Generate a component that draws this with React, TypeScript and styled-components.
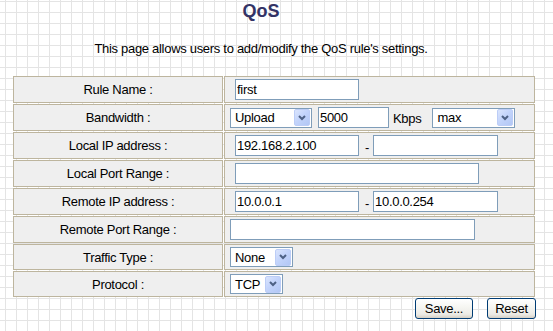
import styled, { createGlobalStyle } from "styled-components";

const GlobalStyle = createGlobalStyle`
  html, body {
    margin: 0;
    padding: 0;
    overflow: hidden;
  }
  body {
    font-family: "Liberation Sans", Arial, sans-serif;
    font-size: 13px;
    letter-spacing: -0.3px;
    color: #000;
    background-color: #fff;
    background-image:
      linear-gradient(to right, #e4e4e4 1px, transparent 1px),
      linear-gradient(to bottom, #e4e4e4 1px, transparent 1px);
    background-size: 11px 11px;
    background-position: 5px 1px;
    min-height: 331px;
  }
`;

const Page = styled.div`
  width: 553px;
`;

const Title = styled.h1`
  width: 522px;
  margin: 1px 0 0;
  text-align: center;
  font-size: 18px;
  line-height: 20px;
  font-weight: bold;
  letter-spacing: 0;
  color: #333366;
`;

const Intro = styled.p`
  width: 522px;
  margin: 20px 0 0;
  text-align: center;
  line-height: 15px;
`;

const RuleTable = styled.table`
  width: 524px;
  margin: 19px 0 0 12px;
  table-layout: fixed;
  border-collapse: separate;
  border-spacing: 1px;
`;

const LabelCell = styled.td`
  width: 198px;
  padding: 2px 5px;
  border: 1px solid #bdb59e;
  background: #efefef;
  text-align: center;
  vertical-align: middle;
  white-space: nowrap;
`;

const ValueCell = styled.td`
  padding: 2px 5px;
  border: 1px solid #bdb59e;
  background: #efefef;
  vertical-align: middle;
  white-space: nowrap;
`;

const FieldRow = styled.div`
  display: flex;
  align-items: center;
`;

const TextField = styled.input<{ $width: number; $indent?: number }>`
  box-sizing: border-box;
  width: ${(p) => p.$width}px;
  height: 21px;
  margin: 0 0 0 ${(p) => p.$indent ?? 0}px;
  padding: 0 1px;
  border: 1px solid #7f9db9;
  border-radius: 0;
  background: #fff;
  font: 13px "Liberation Sans", Arial, sans-serif;
  letter-spacing: -0.3px;
  color: #000;
  outline: none;
`;

const Dash = styled.span`
  padding-top: 4px;
  margin: 0 4px 0 6px;
  line-height: 15px;
`;

const Unit = styled.span`
  margin: 2px 11px 0 4px;
  line-height: 15px;
`;

const SelectBox = styled.div<{ $width: number }>`
  box-sizing: border-box;
  display: flex;
  align-items: center;
  width: ${(p) => p.$width}px;
  height: 20px;
  padding: 0 1px 0 0;
  border: 1px solid #7f9db9;
  background: #fff;
`;

const SelectValue = styled.span`
  flex: 1;
  padding-left: 4px;
  line-height: 15px;
`;

const SelectArrow = styled.span`
  box-sizing: border-box;
  display: flex;
  align-items: center;
  justify-content: center;
  width: 16px;
  height: 17px;
  border: 1px solid #bccdf7;
  border-radius: 2px;
  background: linear-gradient(135deg, #dbe5fd 0%, #c3d4fb 45%, #b2c7f5 100%);
`;

const Actions = styled.div`
  display: flex;
  justify-content: flex-end;
  gap: 14px;
  width: 536px;
`;

const Button = styled.button<{ $width: number }>`
  box-sizing: border-box;
  width: ${(p) => p.$width}px;
  height: 21px;
  padding: 0;
  border: 1px solid #003c74;
  border-radius: 3px;
  background: linear-gradient(to bottom, #ffffff 0%, #f5f5f1 45%, #ecebe6 80%, #d6d0c5 100%);
  font: 13px "Liberation Sans", Arial, sans-serif;
  letter-spacing: -0.3px;
  color: #000;
  line-height: 19px;
`;

function Chevron(): JSX.Element {
  return (
    <svg width="8" height="6" viewBox="0 0 8 6">
      <polyline points="1,1 4,4 7,1" fill="none" stroke="#4d6185" strokeWidth="2" />
    </svg>
  );
}

interface SelectProps {
  value: string;
  width: number;
}

function Select({ value, width }: SelectProps): JSX.Element {
  return (
    <SelectBox $width={width}>
      <SelectValue>{value}</SelectValue>
      <SelectArrow>
        <Chevron />
      </SelectArrow>
    </SelectBox>
  );
}

function ruleRows(): { label: string; content: JSX.Element }[] {
  return [
    {
      label: "Rule Name :",
      content: <FieldRow><TextField $width={124} $indent={5} defaultValue="first" /></FieldRow>,
    },
    {
      label: "Bandwidth :",
      content: (
        <FieldRow>
          <Select value="Upload" width={82} />
          <TextField $width={71} $indent={6} defaultValue="5000" />
          <Unit>Kbps</Unit>
          <Select value="max" width={83} />
        </FieldRow>
      ),
    },
    {
      label: "Local IP address :",
      content: (
        <FieldRow>
          <TextField $width={124} $indent={5} defaultValue="192.168.2.100" />
          <Dash>-</Dash>
          <TextField $width={125} defaultValue="" />
        </FieldRow>
      ),
    },
    {
      label: "Local Port Range :",
      content: <FieldRow><TextField $width={244} $indent={5} defaultValue="" /></FieldRow>,
    },
    {
      label: "Remote IP address :",
      content: (
        <FieldRow>
          <TextField $width={124} $indent={5} defaultValue="10.0.0.1" />
          <Dash>-</Dash>
          <TextField $width={125} defaultValue="10.0.0.254" />
        </FieldRow>
      ),
    },
    {
      label: "Remote Port Range :",
      content: <FieldRow><TextField $width={245} defaultValue="" /></FieldRow>,
    },
    {
      label: "Traffic Type :",
      content: <FieldRow><Select value="None" width={63} /></FieldRow>,
    },
    {
      label: "Protocol :",
      content: <FieldRow><Select value="TCP" width={53} /></FieldRow>,
    },
  ];
}

export default function App(): JSX.Element {
  return (
    <Page>
      <GlobalStyle />
      <Title>QoS</Title>
      <Intro>This page allows users to add/modify the QoS rule's settings.</Intro>
      <RuleTable>
        <tbody>
          {ruleRows().map((row) => (
            <tr key={row.label}>
              <LabelCell>{row.label}</LabelCell>
              <ValueCell>{row.content}</ValueCell>
            </tr>
          ))}
        </tbody>
      </RuleTable>
      <Actions>
        <Button $width={58}>Save...</Button>
        <Button $width={49}>Reset</Button>
      </Actions>
    </Page>
  );
}
